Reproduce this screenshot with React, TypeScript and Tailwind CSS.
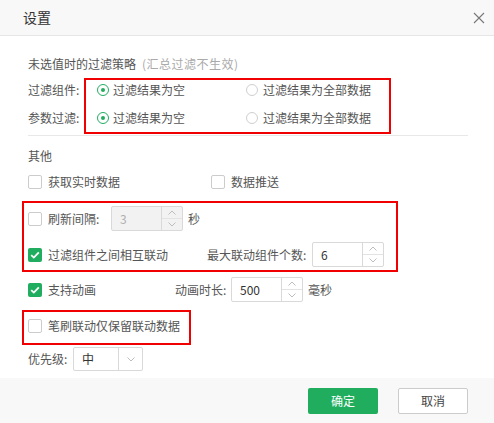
import React from "react";

const FONT = { fontFamily: '"Noto Sans CJK SC", "Noto Sans", sans-serif' };

function Radio({ checked }: { checked?: boolean }) {
  return checked ? (
    <span className="w-[12px] h-[12px] rounded-full border border-[#21ad5f] flex items-center justify-center shrink-0">
      <span className="w-[4px] h-[4px] rounded-full bg-[#21ad5f]" />
    </span>
  ) : (
    <span className="w-[12px] h-[12px] rounded-full border border-[#cfcfcf] shrink-0" />
  );
}

function Check({ checked }: { checked?: boolean }) {
  return checked ? (
    <span className="w-[14px] h-[14px] rounded-[2px] bg-[#21ad5f] flex items-center justify-center shrink-0">
      <svg width="10" height="8" viewBox="0 0 10 8">
        <path d="M1.2 4.2 L3.8 6.6 L8.8 1.4" stroke="#fff" strokeWidth="1.8" fill="none" />
      </svg>
    </span>
  ) : (
    <span className="w-[14px] h-[14px] rounded-[2px] border border-[#cccccc] bg-white shrink-0" />
  );
}

function Chevron({ up }: { up?: boolean }) {
  return (
    <svg width="8" height="5" viewBox="0 0 8 5">
      <path d={up ? "M0.5 4.5 L4 1 L7.5 4.5" : "M0.5 0.5 L4 4 L7.5 0.5"} stroke="#bdbdbd" strokeWidth="1" fill="none" />
    </svg>
  );
}

function Spin({ value, width, disabled }: { value: string; width: string; disabled?: boolean }) {
  return (
    <div className={`${width} h-[25px] flex border border-[#d9d9d9] rounded-[2px] ${disabled ? "bg-[#f2f2f2]" : "bg-white"}`}>
      <div className={`flex-1 flex items-center pl-[8px] text-[12px] ${disabled ? "text-[#b0b0b0]" : "text-[#333]"}`}>{value}</div>
      <div className="w-[21px] border-l border-[#d9d9d9] flex flex-col">
        <div className="flex-1 flex items-center justify-center border-b border-[#e3e3e3]"><Chevron up /></div>
        <div className="flex-1 flex items-center justify-center"><Chevron /></div>
      </div>
    </div>
  );
}

export default function App() {
  return (
    <div className="relative w-[494px] h-[423px] bg-white text-[12px] text-[#555] overflow-hidden" style={FONT}>
      {/* header */}
      <div className="h-[36px] bg-[#f8f8f8] border-b border-[#e6e6e6] flex items-center justify-between pl-[23px] pr-[8px]">
        <span className="text-[14px] text-[#333]">设置</span>
        <svg width="12" height="12" viewBox="0 0 12 12" className="mr-[1px]">
          <path d="M1 1 L11 11 M11 1 L1 11" stroke="#777" strokeWidth="1.1" />
        </svg>
      </div>

      {/* body */}
      <div className="h-[342px] pl-[28px] flex flex-col">
        <div className="h-[24px] mt-[16px] flex items-center">
          <span>未选值时的过滤策略</span>
          <span className="text-[#aaa] ml-[6px] tracking-[0.5px]">(汇总过滤不生效)</span>
        </div>
        <div className="h-[24px] mt-[2px] flex items-center">
          <span className="w-[69px]">过滤组件:</span>
          <Radio checked />
          <span className="ml-[4px] w-[133px]">过滤结果为空</span>
          <Radio />
          <span className="ml-[5px]">过滤结果为全部数据</span>
        </div>
        <div className="h-[24px] mt-[4px] flex items-center">
          <span className="w-[69px]">参数过滤:</span>
          <Radio checked />
          <span className="ml-[4px] w-[133px]">过滤结果为空</span>
          <Radio />
          <span className="ml-[5px]">过滤结果为全部数据</span>
        </div>
        <div className="mt-[5px] h-[1px] w-[440px] bg-[#e8e8e8]" />
        <div className="h-[24px] mt-[8px] flex items-center">其他</div>
        <div className="h-[24px] mt-[2px] flex items-center">
          <Check />
          <span className="ml-[6px] w-[163px]">获取实时数据</span>
          <Check />
          <span className="ml-[6px]">数据推送</span>
        </div>
        <div className="h-[25px] mt-[12px] flex items-center">
          <Check />
          <span className="ml-[6px] w-[63px]">刷新间隔:</span>
          <Spin value="3" width="w-[72px]" disabled />
          <span className="ml-[5px]">秒</span>
        </div>
        <div className="h-[25px] mt-[11px] flex items-center">
          <Check checked />
          <span className="ml-[6px] w-[159px]">过滤组件之间相互联动</span>
          <span className="w-[105px]">最大联动组件个数:</span>
          <Spin value="6" width="w-[72px]" />
        </div>
        <div className="h-[25px] mt-[10px] flex items-center">
          <Check checked />
          <span className="ml-[6px] w-[127px]">支持动画</span>
          <span className="w-[56px]">动画时长:</span>
          <Spin value="500" width="w-[72px]" />
          <span className="ml-[5px]">毫秒</span>
        </div>
        <div className="h-[24px] mt-[12px] flex items-center">
          <Check />
          <span className="ml-[6px]">笔刷联动仅保留联动数据</span>
        </div>
        <div className="h-[24px] mt-[9px] flex items-center">
          <span className="w-[45px]">优先级:</span>
          <div className="w-[70px] h-[24px] flex border border-[#d9d9d9] rounded-[2px] bg-white">
            <div className="flex-1 flex items-center pl-[8px] text-[#333]">中</div>
            <div className="w-[24px] border-l border-[#d9d9d9] flex items-center justify-center"><Chevron /></div>
          </div>
        </div>
      </div>

      {/* footer */}
      <div className="h-[45px] bg-[#f8f8f8] flex items-center justify-end pr-[26px] gap-[20px]">
        <button className="w-[70px] h-[26px] rounded-[2px] bg-[#20ad5e] text-white text-[12px]" style={FONT}>确定</button>
        <button className="w-[70px] h-[26px] rounded-[2px] bg-white border border-[#cccccc] text-[#444] text-[12px]" style={FONT}>取消</button>
      </div>

      {/* red annotation boxes */}
      <div className="absolute left-[84px] top-[78px] w-[307px] h-[56px] border-2 border-[#f00000] pointer-events-none" />
      <div className="absolute left-[22px] top-[201px] w-[376px] h-[71px] border-2 border-[#f00000] pointer-events-none" />
      <div className="absolute left-[22px] top-[310px] w-[169px] h-[35px] border-2 border-[#f00000] pointer-events-none" />
    </div>
  );
}
